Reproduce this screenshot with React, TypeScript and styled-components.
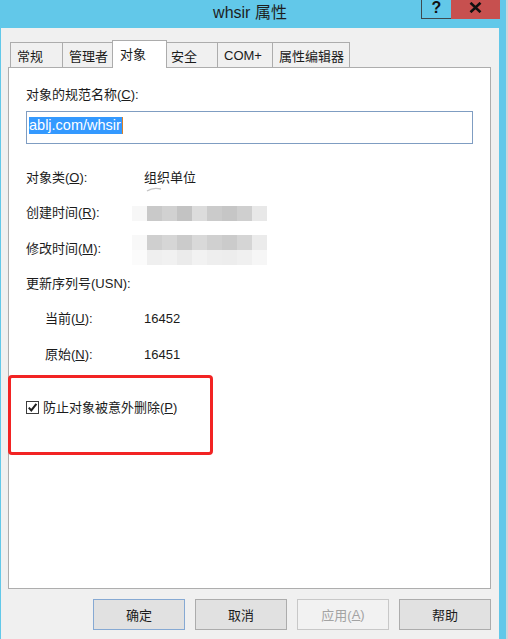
import React from "react";
import styled, { createGlobalStyle } from "styled-components";

const GlobalStyle = createGlobalStyle`
  html, body { margin: 0; padding: 0; background: #ffffff; }
  body { font-family: "Liberation Sans", "Noto Sans CJK SC", sans-serif; color: #1b1b1b; }
  * { box-sizing: border-box; }
`;

const FONT = `"Liberation Sans", "Noto Sans CJK SC", sans-serif`;

const Window = styled.div`
  width: 508px;
  height: 639px;
  background: #62c8e9;
  border-right: 2px solid #cfd4d8;
  display: flex;
  flex-direction: column;
  overflow: hidden;
`;

const TitleBar = styled.div`
  height: 28px;
  display: flex;
  align-items: flex-start;
  padding-right: 6px;
  flex-shrink: 0;
`;

const Title = styled.div`
  flex: 1;
  text-align: center;
  padding-left: 79px;
  font-family: ${FONT};
  font-size: 16px;
  line-height: 26px;
  color: #1e1e1e;
`;

const HelpButton = styled.div`
  width: 30px;
  height: 19px;
  border: 1px solid #3e4a50;
  border-top: none;
  border-right: none;
  display: flex;
  justify-content: center;
  align-items: flex-start;
  font-family: "Liberation Sans", sans-serif;
  font-weight: bold;
  font-size: 16px;
  line-height: 15px;
  color: #111;
`;

const CloseButton = styled.div`
  width: 49px;
  height: 19px;
  background: #c7504f;
  display: flex;
  justify-content: center;
  align-items: flex-start;
  padding-top: 2px;
`;

const Body = styled.div`
  flex: 1;
  margin-left: 1px;
  margin-right: 7px;
  background: #f0f0f0;
  display: flex;
  flex-direction: column;
`;

const TabBar = styled.div`
  display: flex;
  align-items: flex-end;
  height: 39px;
  padding-left: 9px;
`;

const Tab = styled.div<{ $w: number; $selected?: boolean }>`
  position: relative;
  width: ${(p) => p.$w}px;
  height: ${(p) => (p.$selected ? 28 : 25)}px;
  margin: 0 ${(p) => (p.$selected ? -3 : -1)}px ${(p) => (p.$selected ? -1 : 0)}px
    ${(p) => (p.$selected ? -2 : 0)}px;
  z-index: ${(p) => (p.$selected ? 2 : 1)};
  border: 1px solid #acacac;
  border-bottom: none;
  background: ${(p) => (p.$selected ? "#ffffff" : "#f0f0f0")};
  display: flex;
  align-items: center;
  padding-left: ${(p) => (p.$selected ? 7 : 6)}px;
  padding-bottom: ${(p) => (p.$selected ? 3 : 0)}px;
  font-family: ${FONT};
  font-size: 13px;
  color: #1b1b1b;
  white-space: nowrap;
`;

const Panel = styled.div`
  position: relative;
  margin-left: 7px;
  width: 483px;
  height: 522px;
  background: #ffffff;
  border: 1px solid #adadad;
  padding: 18px 17px 0 17px;
  display: flex;
  flex-direction: column;
  flex-shrink: 0;
`;

const Label = styled.div`
  font-family: ${FONT};
  font-size: 13px;
  line-height: 17px;
  color: #1b1b1b;
  white-space: nowrap;
`;

const NameBox = styled.div`
  margin-top: 8px;
  width: 447px;
  height: 33px;
  border: 1px solid #7f9dc2;
  background: #fff;
  padding: 4px 0 0 2px;
`;

const Selected = styled.span`
  display: inline-block;
  background: #3399ff;
  color: #fff;
  font-family: "Liberation Sans", sans-serif;
  font-size: 14.5px;
  line-height: 17px;
  padding: 0 1px 0 0;
  border-right: 1px solid #d9822b;
`;

const InfoGrid = styled.div`
  margin-top: 16px;
  display: grid;
  grid-template-columns: 118px 1fr;
  grid-auto-rows: 35.3px;
  align-items: center;
`;

const RowLabel = styled(Label)<{ $indent?: boolean }>`
  padding-left: ${(p) => (p.$indent ? 19 : 0)}px;
`;

const Value = styled.div`
  position: relative;
  font-family: ${FONT};
  font-size: 13px;
  line-height: 17px;
  color: #1b1b1b;
  display: flex;
  align-items: center;
  height: 100%;
`;

const Smudge = styled.svg`
  position: absolute;
  left: 2px;
  top: 27px;
`;

const Mosaic = styled.div<{ $rows: number; $shift: number }>`
  margin-left: -12px;
  margin-top: ${(p) => p.$shift}px;
  display: grid;
  grid-template-columns: repeat(9, 15px);
  grid-auto-rows: 15px;
`;

const Cell = styled.div<{ $c: string }>`
  background: ${(p) => p.$c};
`;

const CheckRow = styled.div`
  margin-top: 27px;
  display: flex;
  align-items: center;
  gap: 4px;
`;

const CheckBox = styled.div`
  width: 13px;
  height: 13px;
  border: 1px solid #3c3c3c;
  background: #fff;
  display: flex;
  align-items: center;
  justify-content: center;
`;

const RedMark = styled.div`
  position: absolute;
  left: -1px;
  top: 307px;
  width: 205px;
  height: 80px;
  border: 3px solid #f22323;
  border-radius: 4px;
  pointer-events: none;
`;

const ButtonRow = styled.div`
  margin-top: 10px;
  display: flex;
  justify-content: flex-end;
  gap: 10px;
  padding-right: 8px;
`;

const DialogButton = styled.div<{ $variant?: "default" | "disabled" }>`
  width: 92px;
  height: 31px;
  display: flex;
  align-items: center;
  justify-content: center;
  font-family: ${FONT};
  font-size: 13px;
  background: ${(p) => (p.$variant === "disabled" ? "#f2f2f2" : "#e1e1e1")};
  border: 1px solid
    ${(p) =>
      p.$variant === "default" ? "#86a9d3" : p.$variant === "disabled" ? "#c8c8c8" : "#acacac"};
  color: ${(p) => (p.$variant === "disabled" ? "#a3a3a3" : "#1b1b1b")};
`;

const created = ["#f7f7f7", "#c9c9c9", "#d1d1d1", "#c3c3c3", "#dcdcdc", "#cbcbcb", "#c6c6c6", "#cfcfcf", "#e8e8e8"];
const modifiedTop = ["#f8f8f8", "#cfcfcf", "#d6d6d6", "#cbcbcb", "#d9d9d9", "#d0d0d0", "#cbcbcb", "#d5d5d5", "#ebebeb"];
const modifiedBottom = ["#fbfbfb", "#efefef", "#f1f1f1", "#ebebeb", "#f2f2f2", "#eeeeee", "#ededed", "#f0f0f0", "#f6f6f6"];

const tabs = [
  { label: "常规", w: 53 },
  { label: "管理者", w: 53 },
  { label: "对象", w: 55, selected: true },
  { label: "安全", w: 54 },
  { label: "COM+", w: 56 },
  { label: "属性编辑器", w: 78 },
];

export default function App() {
  return (
    <>
      <GlobalStyle />
      <Window>
        <TitleBar>
          <Title>whsir 属性</Title>
          <HelpButton>?</HelpButton>
          <CloseButton>
            <svg width="13" height="11" viewBox="0 0 13 11">
              <path d="M1.5 0.8 L11.5 10.2 M11.5 0.8 L1.5 10.2" stroke="#111" strokeWidth="2.6" />
            </svg>
          </CloseButton>
        </TitleBar>
        <Body>
          <TabBar>
            {tabs.map((t) => (
              <Tab key={t.label} $w={t.w} $selected={t.selected}>
                {t.label}
              </Tab>
            ))}
          </TabBar>
          <Panel>
            <Label>
              对象的规范名称(<u>C</u>):
            </Label>
            <NameBox>
              <Selected>ablj.com/whsir</Selected>
            </NameBox>
            <InfoGrid>
              <RowLabel>
                对象类(<u>O</u>):
              </RowLabel>
              <Value>
                组织单位
                <Smudge width="16" height="5" viewBox="0 0 16 5">
                  <path d="M1 4 Q7 0 15 2" stroke="#c4c4c4" strokeWidth="1.4" fill="none" />
                </Smudge>
              </Value>
              <RowLabel>
                创建时间(<u>R</u>):
              </RowLabel>
              <Value>
                <Mosaic $rows={1} $shift={1}>
                  {created.map((c, i) => (
                    <Cell key={i} $c={c} />
                  ))}
                </Mosaic>
              </Value>
              <RowLabel>
                修改时间(<u>M</u>):
              </RowLabel>
              <Value>
                <Mosaic $rows={2} $shift={4}>
                  {[...modifiedTop, ...modifiedBottom].map((c, i) => (
                    <Cell key={i} $c={c} />
                  ))}
                </Mosaic>
              </Value>
              <RowLabel>更新序列号(USN):</RowLabel>
              <Value />
              <RowLabel $indent>
                当前(<u>U</u>):
              </RowLabel>
              <Value>16452</Value>
              <RowLabel $indent>
                原始(<u>N</u>):
              </RowLabel>
              <Value>16451</Value>
            </InfoGrid>
            <CheckRow>
              <CheckBox>
                <svg width="11" height="11" viewBox="0 0 11 11">
                  <path d="M1.8 5.6 L4.3 8.4 L9.4 1.8" stroke="#1e1e1e" strokeWidth="2" fill="none" />
                </svg>
              </CheckBox>
              <Label>
                防止对象被意外删除(<u>P</u>)
              </Label>
            </CheckRow>
            <RedMark />
          </Panel>
          <ButtonRow>
            <DialogButton $variant="default">确定</DialogButton>
            <DialogButton>取消</DialogButton>
            <DialogButton $variant="disabled">
              应用(<u>A</u>)
            </DialogButton>
            <DialogButton>帮助</DialogButton>
          </ButtonRow>
        </Body>
      </Window>
    </>
  );
}
